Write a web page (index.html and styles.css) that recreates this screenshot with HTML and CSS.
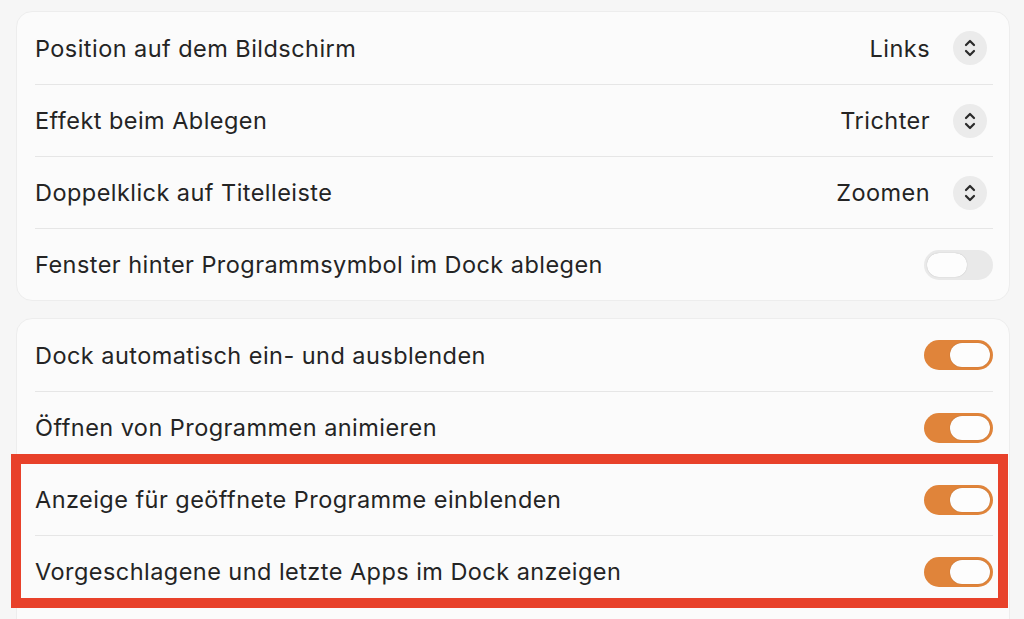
FILE: index.html
```html
<!DOCTYPE html>
<html lang="de">
<head>
<meta charset="utf-8">
<title>Dock</title>
<link rel="stylesheet" href="styles.css">
</head>
<body>
<div class="page">
  <section class="card card-first">
    <div class="row">
      <span class="label">Position auf dem Bildschirm</span>
      <span class="popup"><span class="value">Links</span><span class="stepper"><svg viewBox="0 0 12 20" width="12" height="20"><path d="M2 7 L6 3 L10 7 M2 13 L6 17 L10 13" fill="none" stroke="#2a2a2a" stroke-width="2.2" stroke-linecap="round" stroke-linejoin="round"/></svg></span></span>
    </div>
    <div class="row">
      <span class="label">Effekt beim Ablegen</span>
      <span class="popup"><span class="value">Trichter</span><span class="stepper"><svg viewBox="0 0 12 20" width="12" height="20"><path d="M2 7 L6 3 L10 7 M2 13 L6 17 L10 13" fill="none" stroke="#2a2a2a" stroke-width="2.2" stroke-linecap="round" stroke-linejoin="round"/></svg></span></span>
    </div>
    <div class="row">
      <span class="label">Doppelklick auf Titelleiste</span>
      <span class="popup"><span class="value">Zoomen</span><span class="stepper"><svg viewBox="0 0 12 20" width="12" height="20"><path d="M2 7 L6 3 L10 7 M2 13 L6 17 L10 13" fill="none" stroke="#2a2a2a" stroke-width="2.2" stroke-linecap="round" stroke-linejoin="round"/></svg></span></span>
    </div>
    <div class="row">
      <span class="label">Fenster hinter Programmsymbol im Dock ablegen</span>
      <span class="toggle off"><span class="knob"></span></span>
    </div>
  </section>
  <section class="card card-second">
    <div class="row">
      <span class="label">Dock automatisch ein- und ausblenden</span>
      <span class="toggle on"><span class="knob"></span></span>
    </div>
    <div class="row">
      <span class="label">Öffnen von Programmen animieren</span>
      <span class="toggle on"><span class="knob"></span></span>
    </div>
    <div class="row">
      <span class="label">Anzeige für geöffnete Programme einblenden</span>
      <span class="toggle on"><span class="knob"></span></span>
    </div>
    <div class="row">
      <span class="label">Vorgeschlagene und letzte Apps im Dock anzeigen</span>
      <span class="toggle on"><span class="knob"></span></span>
    </div>
    <div class="highlight"></div>
  </section>
</div>
</body>
</html>
```

FILE: styles.css
```css
html, body {
  margin: 0;
  padding: 0;
  background: #f6f6f6;
  height: 100%;
  overflow: hidden;
}
body {
  font-family: Inter, "Noto Sans", "Liberation Sans", sans-serif;
  color: #242424;
}
.page {
  padding: 11px 14px 0 16px;
  display: flex;
  flex-direction: column;
  gap: 17px;
}
.card {
  background: #fbfbfb;
  border: 1px solid #ededed;
  border-radius: 16px;
  padding: 0 16px 0 18px;
  position: relative;
}
.card-second {
  border-bottom-left-radius: 0;
  border-bottom-right-radius: 0;
  padding-bottom: 12px;
}
.row {
  height: 71px;
  display: flex;
  align-items: center;
  justify-content: space-between;
  border-top: 1px solid #e6e6e6;
}
.row:first-child {
  border-top: none;
  height: 72px;
}
.label {
  font-size: 23.5px;
  letter-spacing: 0.45px;
}
.popup {
  display: flex;
  align-items: center;
  gap: 23px;
  margin-right: 6px;
}
.value {
  font-size: 23.5px;
  letter-spacing: 0.45px;
}
.stepper {
  width: 34px;
  height: 34px;
  border-radius: 50%;
  background: #ebebeb;
  display: flex;
  align-items: center;
  justify-content: center;
}
.stepper svg {
  display: block;
}
.toggle {
  width: 69px;
  height: 30px;
  border-radius: 15px;
  box-sizing: border-box;
  padding: 3px;
  display: flex;
  align-items: center;
}
.toggle.on {
  background: #e0843a;
  justify-content: flex-end;
}
.toggle.off {
  background: #e9e9e9;
  justify-content: flex-start;
}
.knob {
  width: 40px;
  height: 24px;
  border-radius: 12px;
  background: #fdfdfd;
  box-shadow: 0 0 1px rgba(0,0,0,0.25);
}
.highlight {
  position: absolute;
  left: -6px;
  right: 1px;
  top: 135px;
  height: 154px;
  box-sizing: border-box;
  border: 10px solid #e8412a;
  pointer-events: none;
}
```
